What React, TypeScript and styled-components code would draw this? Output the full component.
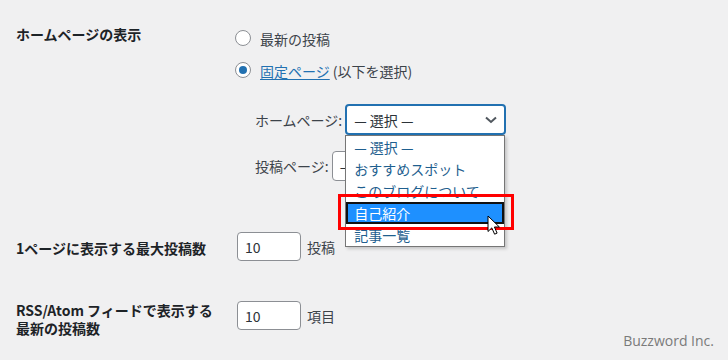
import React from 'react';
import styled, { createGlobalStyle } from 'styled-components';

const Global = createGlobalStyle`
  html, body { margin: 0; padding: 0; background: #f0f0f1; }
  body {
    font-family: "Noto Sans CJK JP", "Noto Sans", sans-serif;
    font-size: 14px;
    color: #3c434a;
  }
  * { box-sizing: border-box; }
`;

const Page = styled.div`
  position: relative;
  width: 728px;
  height: 360px;
  overflow: hidden;
  padding-left: 16px;
`;

const Row = styled.div<{ $top: number }>`
  display: grid;
  grid-template-columns: 210px 1fr;
  column-gap: 10px;
  padding-top: ${(p) => p.$top}px;
`;

const Th = styled.div<{ $offset: number }>`
  padding-top: ${(p) => p.$offset}px;
  font-weight: 700;
  color: #1d2327;
  line-height: 18px;
`;

const Td = styled.div<{ $offset: number }>`
  padding-top: ${(p) => p.$offset}px;
  line-height: 18px;
`;

const RadioLine = styled.label`
  display: flex;
  align-items: center;
  gap: 9px;
  height: 32px;
  color: #3c434a;
`;

const Radio = styled.span<{ $checked?: boolean }>`
  position: relative;
  width: 16px;
  height: 16px;
  border-radius: 50%;
  border: 1px solid #8c8f94;
  background: #fff;
  margin-left: -1px;
  margin-top: -2px;
  &::before {
    content: '';
    display: ${(p) => (p.$checked ? 'block' : 'none')};
    position: absolute;
    left: 3px;
    top: 3px;
    width: 8px;
    height: 8px;
    border-radius: 50%;
    background: #2271b1;
  }
`;

const Link = styled.a`
  color: #2271b1;
  text-decoration: underline;
  text-underline-offset: 2px;
`;

const Nested = styled.div`
  margin-top: 17px;
  padding-left: 19px;
  display: flex;
  flex-direction: column;
  gap: 16px;
`;

const FieldLine = styled.div`
  display: flex;
  align-items: center;
  gap: 3px;
`;

const FieldLabel = styled.span`
  color: #3c434a;
`;

const SelectWrap = styled.div`
  position: relative;
`;

const SelectBox = styled.div<{ $focused?: boolean }>`
  display: flex;
  align-items: center;
  justify-content: space-between;
  width: 161px;
  height: ${(p) => (p.$focused ? 31 : 30)}px;
  padding: 0 7px 0 7px;
  background: #fff;
  border: ${(p) => (p.$focused ? '2px solid #2271b1' : '1px solid #8c8f94')};
  border-radius: 4px;
  color: #2c3338;
`;

const Dropdown = styled.div`
  position: absolute;
  top: 100%;
  left: 0;
  width: 160px;
  background: #fff;
  border: 1px solid #767676;
  box-shadow: 2px 2px 3px rgba(0, 0, 0, 0.18);
  z-index: 10;
`;

const Option = styled.div<{ $active?: boolean }>`
  height: 22px;
  line-height: 22px;
  padding-left: 8px;
  font-size: 14px;
  white-space: nowrap;
  overflow: hidden;
  color: ${(p) => (p.$active ? '#fff' : '#1f5f8f')};
  background: ${(p) => (p.$active ? '#1e90ff' : 'transparent')};
  box-shadow: ${(p) => (p.$active ? 'inset 0 0 0 2px #111' : 'none')};
`;

const RedFrame = styled.div`
  position: absolute;
  left: -8px;
  top: 58px;
  width: 176px;
  height: 36px;
  border: 3px solid #f00;
  pointer-events: none;
`;

const Cursor = styled.svg`
  position: absolute;
  left: 141px;
  top: 79px;
`;

const InputLine = styled.div`
  display: flex;
  align-items: center;
  gap: 6px;
`;

const NumberInput = styled.input`
  width: 64px;
  height: 29px;
  margin-left: 1px;
  padding: 0 7px;
  border: 1px solid #8c8f94;
  border-radius: 4px;
  background: #fff;
  font-family: inherit;
  font-size: 14px;
  color: #2c3338;
  outline: none;
`;

const Watermark = styled.div`
  position: absolute;
  right: 14px;
  bottom: 10px;
  font-family: "Open Sans", "Noto Sans", sans-serif;
  font-size: 14px;
  line-height: 18px;
  color: #7a7a7a;
`;

const Chevron = () => (
  <svg width="12" height="8" viewBox="0 0 12 8">
    <path d="M1 1.5 L6 6 L11 1.5" fill="none" stroke="#50575e" strokeWidth="2" />
  </svg>
);

const options = ['— 選択 —', 'おすすめスポット', 'このブログについて', '自己紹介', '記事一覧'];

export default function App() {
  return (
    <>
      <Global />
      <Page>
        <Row $top={0}>
          <Th $offset={25}>ホームページの表示</Th>
          <Td $offset={23}>
            <RadioLine>
              <Radio />
              最新の投稿
            </RadioLine>
            <RadioLine>
              <Radio $checked />
              <span>
                <Link>固定ページ</Link> (以下を選択)
              </span>
            </RadioLine>
            <Nested>
              <FieldLine>
                <FieldLabel>ホームページ:</FieldLabel>
                <SelectWrap>
                  <SelectBox $focused>
                    <span>— 選択 —</span>
                    <Chevron />
                  </SelectBox>
                  <Dropdown>
                    {options.map((o, i) => (
                      <Option key={o} $active={i === 3}>
                        {o}
                      </Option>
                    ))}
                    <RedFrame />
                    <Cursor width="14" height="21" viewBox="0 0 14 21">
                      <path
                        d="M1 1 L1 16.5 L4.8 12.9 L7.6 19.2 L10.1 18.1 L7.4 12 L12.4 12 Z"
                        fill="#fff"
                        stroke="#000"
                        strokeWidth="1"
                        strokeLinejoin="miter"
                      />
                    </Cursor>
                  </Dropdown>
                </SelectWrap>
              </FieldLine>
              <FieldLine>
                <FieldLabel>投稿ページ:</FieldLabel>
                <SelectBox>
                  <span>— 選択 —</span>
                  <Chevron />
                </SelectBox>
              </FieldLine>
            </Nested>
          </Td>
        </Row>
        <Row $top={51}>
          <Th $offset={7}>1ページに表示する最大投稿数</Th>
          <Td $offset={0}>
            <InputLine>
              <NumberInput readOnly value="10" />
              <span>投稿</span>
            </InputLine>
          </Td>
        </Row>
        <Row $top={40}>
          <Th $offset={0}>
            RSS/Atom フィードで表示する
            <br />
            最新の投稿数
          </Th>
          <Td $offset={0}>
            <InputLine>
              <NumberInput readOnly value="10" />
              <span>項目</span>
            </InputLine>
          </Td>
        </Row>
        <Watermark>Buzzword Inc.</Watermark>
      </Page>
    </>
  );
}
